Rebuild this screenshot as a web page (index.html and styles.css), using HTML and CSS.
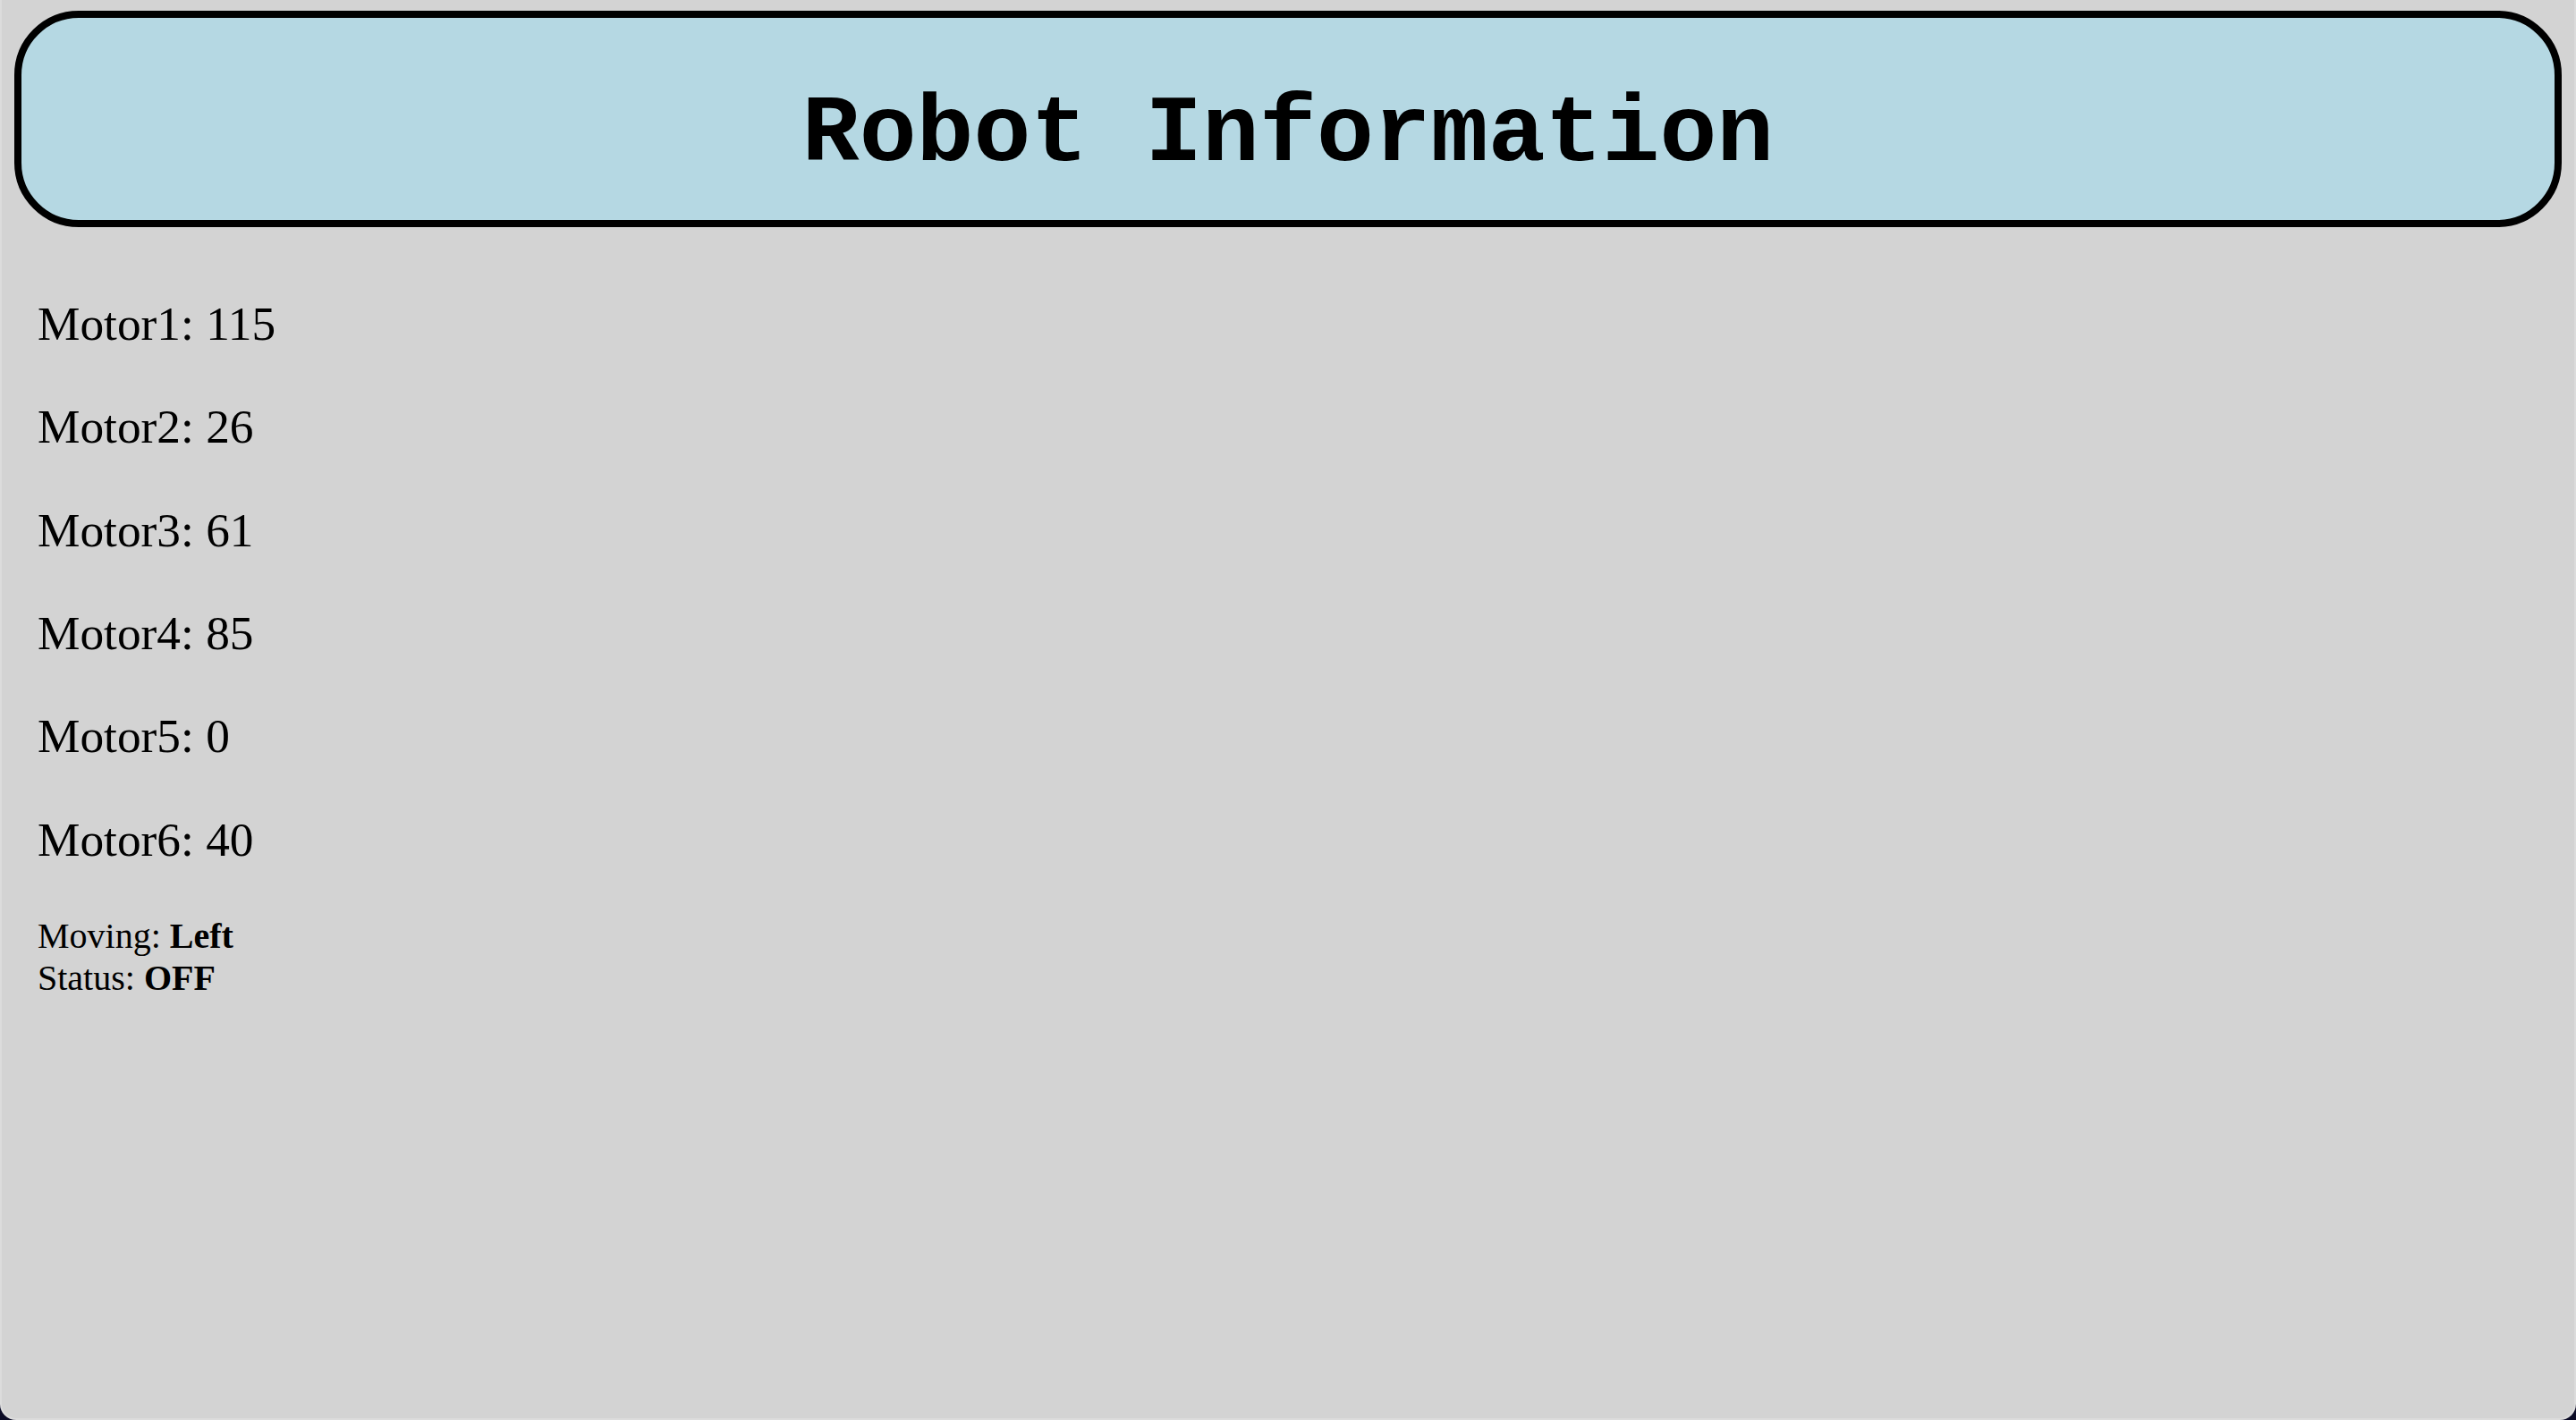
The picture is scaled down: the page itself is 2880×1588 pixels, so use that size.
FILE: index.html
```html
<!DOCTYPE html>
<html lang="en">
<head>
<meta charset="utf-8">
<title>Robot Information</title>
<link rel="stylesheet" href="styles.css">
</head>
<body>
<div class="window">
  <header class="banner">
    <h1 class="banner-title">Robot Information</h1>
  </header>
  <main class="content">
    <p class="motor">Motor1: 115</p>
    <p class="motor">Motor2: 26</p>
    <p class="motor">Motor3: 61</p>
    <p class="motor">Motor4: 85</p>
    <p class="motor">Motor5: 0</p>
    <p class="motor">Motor6: 40</p>
    <div class="state">
      <div class="state-line">Moving: <b>Left</b></div>
      <div class="state-line">Status: <b>OFF</b></div>
    </div>
  </main>
</div>
</body>
</html>
```

FILE: styles.css
```css
html {
  background: #0b0b26;
}
body {
  margin: 0;
  font-family: "Liberation Serif", "Times New Roman", serif;
  color: #000;
}
.window {
  box-sizing: border-box;
  height: 1588px;
  background: #d3d3d3;
  border-left: 2px solid #dcdcdc;
  border-right: 2px solid #dcdcdc;
  border-bottom: 2px solid #dcdcdc;
  border-radius: 0 0 18px 18px;
  overflow: hidden;
  display: flow-root;
}
.banner {
  margin: 12px 14px 77px 14px;
  height: 242px;
  box-sizing: border-box;
  border: 8px solid #000;
  border-radius: 72px;
  background: #b5d8e3;
  padding-top: 70px;
}
.banner-title {
  margin: 0;
  text-align: center;
  font-family: "Liberation Mono", "Courier New", monospace;
  font-weight: bold;
  font-size: 106.5px;
  line-height: normal;
}
.content {
  padding: 0 40px;
}
.motor {
  font-size: 53.33px;
  line-height: normal;
  margin: 53.33px 0;
}
.state {
  font-size: 40px;
  line-height: normal;
}
```
